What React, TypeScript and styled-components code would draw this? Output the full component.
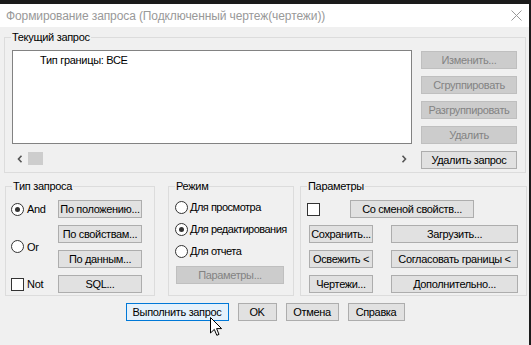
import styled, { createGlobalStyle } from 'styled-components'

const GlobalStyle = createGlobalStyle`
  html, body {
    margin: 0;
    padding: 0;
    background: #1b1b1b;
  }
  body {
    font-family: "Liberation Sans", Arial, sans-serif;
    font-size: 11px;
    letter-spacing: -0.3px;
    color: #000;
  }
`

const Window = styled.div`
  position: relative;
  margin-top: 4px;
  width: 529px;
  height: 341px;
  background: #f0f0f0;
  display: flex;
  flex-direction: column;
`

const TitleBar = styled.div`
  height: 23px;
  background: #fff;
  display: flex;
  align-items: center;
  justify-content: space-between;
  padding: 0 7px 0 6px;
`

const Title = styled.div`
  font-size: 12px;
  letter-spacing: -0.1px;
  color: #999;
  white-space: nowrap;
`

const Body = styled.div`
  padding: 3px 3px 0 4px;
  display: flex;
  flex-direction: column;
`

const Group = styled.fieldset<{ $w?: number }>`
  margin: 0;
  border: 1px solid #dcdcdc;
  padding: 0;
  min-width: 0;
  box-sizing: border-box;
  ${({ $w }) => ($w ? `width: ${$w}px; flex: none;` : '')}
`

const Legend = styled.legend`
  padding: 0 1px;
  margin-left: 6px;
  line-height: 14px;
  font-size: 11px;
`

const GroupInner = styled.div<{ $pad: string }>`
  padding: ${({ $pad }) => $pad};
`

const QueryArea = styled.div`
  display: flex;
  gap: 9px;
`

const ListCol = styled.div`
  width: 400px;
  display: flex;
  flex-direction: column;
`

const ListBox = styled.div`
  height: 94px;
  background: #fff;
  border: 1px solid #828282;
  box-sizing: border-box;
  padding: 3px 0 0 27px;
`

const ScrollBar = styled.div`
  margin-top: 6px;
  height: 17px;
  display: flex;
  align-items: center;
`

const ScrollArrow = styled.div`
  width: 16px;
  height: 17px;
  display: flex;
  align-items: center;
  justify-content: center;
`

const Thumb = styled.div`
  width: 15px;
  height: 13px;
  background: #cdcdcd;
`

const ScrollTrack = styled.div`
  flex: 1;
`

const ButtonCol = styled.div`
  display: flex;
  flex-direction: column;
  gap: 7px;
  padding-top: 1px;
`

const Button = styled.button<{ $w?: number; $focus?: boolean; $col?: number }>`
  height: 18px;
  width: ${({ $w }) => ($w ? `${$w}px` : '100%')};
  ${({ $col }) => ($col ? `grid-column: ${$col};` : '')}
  margin: 0;
  padding: 0;
  box-sizing: border-box;
  font-family: "Liberation Sans", Arial, sans-serif;
  font-size: 11px;
  letter-spacing: -0.35px;
  line-height: 16px;
  color: #000;
  background: ${({ $focus }) => ($focus ? '#e5f1fb' : '#e1e1e1')};
  border: 1px solid ${({ $focus }) => ($focus ? '#0078d7' : '#adadad')};
  white-space: nowrap;
  &:disabled {
    background: #cccccc;
    border-color: #bfbfbf;
    color: #838383;
  }
`

const LowerRow = styled.div`
  display: flex;
  margin: 6px 0 0 1px;
`

const TypeGrid = styled.div`
  display: grid;
  grid-template-columns: 46px 84px;
  grid-template-rows: repeat(4, 18px);
  row-gap: 7px;
`

const Option = styled.label<{ $row: string }>`
  grid-column: 1;
  grid-row: ${({ $row }) => $row};
  display: flex;
  align-items: center;
  gap: 3px;
  margin-left: -1px;
`

const Radio = styled.span<{ $on?: boolean }>`
  width: 11px;
  height: 11px;
  border: 1px solid #333;
  border-radius: 50%;
  background: #fff;
  display: flex;
  align-items: center;
  justify-content: center;
  flex: none;
  &::after {
    content: '';
    width: 5px;
    height: 5px;
    border-radius: 50%;
    background: ${({ $on }) => ($on ? '#333' : 'transparent')};
  }
`

const Check = styled.span`
  width: 11px;
  height: 11px;
  border: 1px solid #333;
  background: #fff;
  flex: none;
`

const ModeList = styled.div`
  display: flex;
  flex-direction: column;
  gap: 6px;
`

const ModeOption = styled.label`
  height: 16px;
  display: flex;
  align-items: center;
  gap: 2px;
  white-space: nowrap;
  letter-spacing: -0.5px;
`

const ParamsGrid = styled.div`
  display: grid;
  grid-template-columns: 64px 127px;
  grid-template-rows: repeat(4, 18px);
  column-gap: 18px;
  row-gap: 7px;
`

const ParamsTop = styled.div`
  grid-column: 1 / 3;
  display: flex;
  align-items: center;
  gap: 30px;
  margin-left: -2px;
`

const Footer = styled.div`
  display: flex;
  justify-content: center;
  gap: 9px;
  margin-top: 7px;
`

const Cursor = styled.svg`
  position: absolute;
  left: 210px;
  top: 313px;
`

const Chevron = ({ dir }: { dir: 'l' | 'r' }) => (
  <svg width="6" height="8" viewBox="0 0 6 8">
    <path
      d={dir === 'l' ? 'M4.5 0.8 L1.5 4 L4.5 7.2' : 'M1.5 0.8 L4.5 4 L1.5 7.2'}
      fill="none"
      stroke="#555"
      strokeWidth="1.6"
    />
  </svg>
)

export default function App() {
  return (
    <>
      <GlobalStyle />
      <Window>
        <TitleBar>
          <Title>Формирование запроса (Подключенный чертеж(чертежи))</Title>
          <svg width="11" height="11" viewBox="0 0 11 11">
            <path d="M0.5 0.5 L10.5 10.5 M10.5 0.5 L0.5 10.5" stroke="#999" strokeWidth="1" />
          </svg>
        </TitleBar>
        <Body>
          <Group>
            <Legend>Текущий запрос</Legend>
            <GroupInner $pad="6px 8px 3px 7px">
              <QueryArea>
                <ListCol>
                  <ListBox>Тип границы: ВСЕ</ListBox>
                  <ScrollBar>
                    <ScrollArrow>
                      <Chevron dir="l" />
                    </ScrollArrow>
                    <Thumb />
                    <ScrollTrack />
                    <ScrollArrow>
                      <Chevron dir="r" />
                    </ScrollArrow>
                  </ScrollBar>
                </ListCol>
                <ButtonCol>
                  <Button $w={96} disabled>Изменить...</Button>
                  <Button $w={96} disabled>Сгруппировать</Button>
                  <Button $w={96} disabled>Разгруппировать</Button>
                  <Button $w={96} disabled>Удалить</Button>
                  <Button $w={96}>Удалить запрос</Button>
                </ButtonCol>
              </QueryArea>
            </GroupInner>
          </Group>
          <LowerRow>
            <Group $w={150}>
              <Legend>Тип запроса</Legend>
              <GroupInner $pad="7px 11px 2px 6px">
                <TypeGrid>
                  <Option $row="1">
                    <Radio $on />
                    And
                  </Option>
                  <Option $row="2 / 4">
                    <Radio />
                    Or
                  </Option>
                  <Option $row="4">
                    <Check />
                    Not
                  </Option>
                  <Button $col={2}>По положению...</Button>
                  <Button $col={2}>По свойствам...</Button>
                  <Button $col={2}>По данным...</Button>
                  <Button $col={2}>SQL...</Button>
                </TypeGrid>
              </GroupInner>
            </Group>
            <Group $w={126} style={{ marginLeft: 13 }}>
              <Legend>Режим</Legend>
              <GroupInner $pad="6px 9px 2px 6px">
                <ModeList>
                  <ModeOption>
                    <Radio />
                    Для просмотра
                  </ModeOption>
                  <ModeOption>
                    <Radio $on />
                    Для редактирования
                  </ModeOption>
                  <ModeOption>
                    <Radio />
                    Для отчета
                  </ModeOption>
                  <Button $w={108} disabled style={{ marginLeft: 1, marginTop: 1 }}>
                    Параметры...
                  </Button>
                </ModeList>
              </GroupInner>
            </Group>
            <Group $w={227} style={{ marginLeft: 6 }}>
              <Legend>Параметры</Legend>
              <GroupInner $pad="7px 8px 2px 8px">
                <ParamsGrid>
                  <ParamsTop>
                    <Check />
                    <Button $w={124}>Со сменой свойств...</Button>
                  </ParamsTop>
                  <Button>Сохранить...</Button>
                  <Button>Загрузить...</Button>
                  <Button>Освежить &lt;</Button>
                  <Button>Согласовать границы &lt;</Button>
                  <Button>Чертежи...</Button>
                  <Button>Дополнительно...</Button>
                </ParamsGrid>
              </GroupInner>
            </Group>
          </LowerRow>
          <Footer>
            <Button $w={103} $focus>Выполнить запрос</Button>
            <Button $w={39}>OK</Button>
            <Button $w={53}>Отмена</Button>
            <Button $w={57}>Справка</Button>
          </Footer>
        </Body>
        <Cursor width="13" height="20" viewBox="0 0 13 20">
          <path
            d="M0.5 0.5 L0.5 16 L4.3 12.4 L6.8 18.3 L9 17.4 L6.6 11.6 L11.6 11.6 Z"
            fill="#fff"
            stroke="#000"
            strokeWidth="1"
          />
        </Cursor>
      </Window>
    </>
  )
}
